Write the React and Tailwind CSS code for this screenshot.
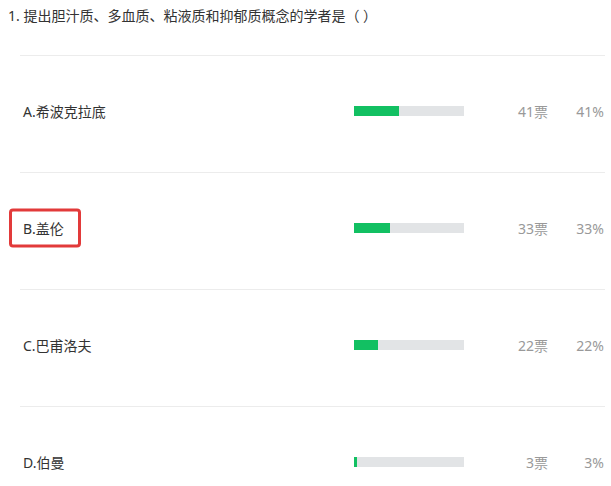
import React from "react";

const options = [
  { label: "A.希波克拉底", votes: 41, pct: 41 },
  { label: "B.盖伦", votes: 33, pct: 33, marked: true },
  { label: "C.巴甫洛夫", votes: 22, pct: 22 },
  { label: "D.伯曼", votes: 3, pct: 3 },
];

export default function App() {
  return (
    <div
      className="w-[611px] h-[486px] overflow-hidden bg-white text-[14px] text-[#333]"
      style={{ fontFamily: '"Noto Sans", "Noto Sans CJK SC", sans-serif' }}
    >
      {/* 题目 */}
      <div className="pl-[8px] pt-[6px] h-[55px] leading-[20px]">
        1. 提出胆汁质、多血质、粘液质和抑郁质概念的学者是（ ）
      </div>

      {/* 选项 */}
      <div className="ml-[20px] mr-[6px]">
        {options.map((o) => (
          <div
            key={o.label}
            className="h-[117px] pb-[6px] border-t border-[#ececec] flex items-center"
          >
            <div className="flex-1 pl-[3px] relative">
              <span className="relative">
                {o.label}
                {o.marked && (
                  <span className="absolute left-[-14px] top-1/2 -translate-y-1/2 w-[72px] h-[39px] border-[3px] border-[#e23a3a] rounded-[4px]" />
                )}
              </span>
            </div>
            <div className="w-[110px] h-[10px] mt-[-1px] bg-[#e2e4e6]">
              <div className="h-full bg-[#12c062]" style={{ width: `${o.pct}%` }} />
            </div>
            <div className="w-[84px] text-right text-[#999]">{o.votes}票</div>
            <div className="w-[57px] text-right text-[#999] pr-[1px]">{o.pct}%</div>
          </div>
        ))}
      </div>
    </div>
  );
}
